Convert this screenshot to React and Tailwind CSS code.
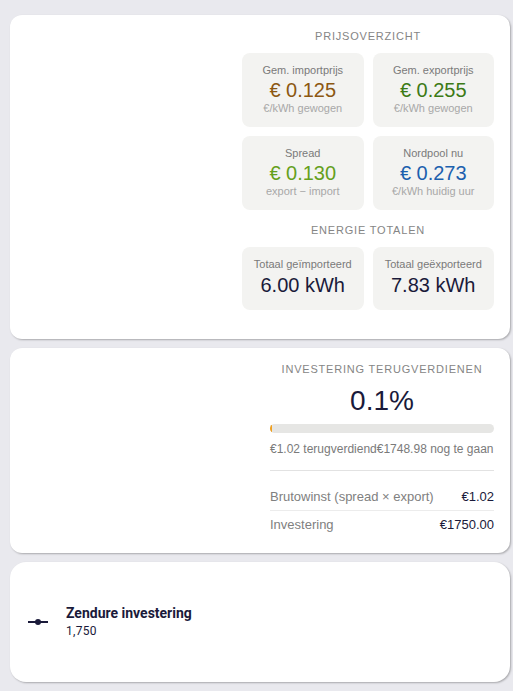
export default function App() {
  const tiles = [
    { label: "Gem. importprijs", value: "€ 0.125", sub: "€/kWh gewogen", color: "text-[#8c5812]" },
    { label: "Gem. exportprijs", value: "€ 0.255", sub: "€/kWh gewogen", color: "text-[#3c7a16]" },
    { label: "Spread", value: "€ 0.130", sub: "export − import", color: "text-[#65a01c]" },
    { label: "Nordpool nu", value: "€ 0.273", sub: "€/kWh huidig uur", color: "text-[#1c60ae]" },
  ];
  const totals = [
    { label: "Totaal geïmporteerd", value: "6.00 kWh" },
    { label: "Totaal geëxporteerd", value: "7.83 kWh" },
  ];

  return (
    <div className="min-h-[691px] bg-[#e9e9ee] pt-[15px] pb-[9px] pl-[10px] pr-[3px] flex flex-col gap-[9px] font-['Liberation_Sans',Arial,sans-serif]">
      {/* prijsoverzicht */}
      <div className="bg-white rounded-[12px] shadow-[1px_1px_2px_rgba(0,0,0,0.28)] pt-[14px] pb-[29px] pr-[16px] flex justify-end">
        <div className="w-[252px] flex flex-col">
          <h2 className="text-[11px] leading-[14px] tracking-[0.8px] text-[#858585] text-center">PRIJSOVERZICHT</h2>
          <div className="grid grid-cols-2 gap-[9px] mt-[10px]">
            {tiles.map((t) => (
              <div key={t.label} className="bg-[#f3f3f1] rounded-[8px] h-[74px] pt-[10px] flex flex-col items-center">
                <p className="text-[11px] leading-[14px] text-[#7a7a7a]">{t.label}</p>
                <p className={"text-[20px] leading-[24px] mt-[1px] " + t.color}>{t.value}</p>
                <p className="text-[11px] leading-[13px] text-[#a8a8a8]">{t.sub}</p>
              </div>
            ))}
          </div>
          <h2 className="text-[11px] leading-[14px] tracking-[0.8px] text-[#858585] text-center mt-[13px]">ENERGIE TOTALEN</h2>
          <div className="grid grid-cols-2 gap-[9px] mt-[10px]">
            {totals.map((t) => (
              <div key={t.label} className="bg-[#f3f3f1] rounded-[8px] h-[63px] pt-[10px] flex flex-col items-center">
                <p className="text-[11px] leading-[14px] text-[#7a7a7a]">{t.label}</p>
                <p className="text-[20px] leading-[24px] mt-[2px] text-[#1a1a3a]">{t.value}</p>
              </div>
            ))}
          </div>
        </div>
      </div>

      {/* investering */}
      <div className="bg-white rounded-[12px] shadow-[1px_1px_2px_rgba(0,0,0,0.28)] pt-[14px] pb-[14px] pr-[16px] flex justify-end">
        <div className="w-[224px] flex flex-col">
          <h2 className="text-[11px] leading-[14px] tracking-[0.8px] text-[#858585] text-center whitespace-nowrap">INVESTERING TERUGVERDIENEN</h2>
          <p className="text-[28px] leading-[34px] mt-[8px] text-center text-[#1a1a3a]">0.1%</p>
          <div className="h-[9px] mt-[6px] rounded-full bg-[#e6e6e4] overflow-hidden">
            <div className="h-full w-[2px] bg-[#f0a020]" />
          </div>
          <div className="flex whitespace-nowrap text-[12px] leading-[16px] text-[#7a7a7a] mt-[8px]">
            <span>€1.02 terugverdiend</span>
            <span>€1748.98 nog te gaan</span>
          </div>
          <div className="border-t border-[#e2e2e2] mt-[13px] pt-[12px] text-[13px]">
            <div className="flex justify-between h-[28px] items-center border-b border-[#ececec]">
              <span className="text-[#808080]">Brutowinst (spread × export)</span>
              <span className="text-[#1a1a3a]">€1.02</span>
            </div>
            <div className="flex justify-between h-[28px] items-center">
              <span className="text-[#808080]">Investering</span>
              <span className="text-[#1a1a3a]">€1750.00</span>
            </div>
          </div>
        </div>
      </div>

      {/* entity */}
      <div className="bg-white rounded-[16px] shadow-[1px_1px_2px_rgba(0,0,0,0.28)] h-[120px] flex items-center pl-[16px] font-['Roboto',sans-serif]">
        <svg width="24" height="24" viewBox="0 0 24 24" className="text-[#1a1a3a]">
          <line x1="2" y1="12" x2="22" y2="12" stroke="currentColor" strokeWidth="2" />
          <circle cx="12" cy="12" r="3" fill="currentColor" />
        </svg>
        <div className="ml-[16px] flex flex-col">
          <span className="text-[14px] leading-[18px] font-bold text-[#1a1a3a]">Zendure investering</span>
          <span className="text-[12px] leading-[18px] text-[#1a1a3a] tracking-[0.3px]">1,750</span>
        </div>
      </div>
    </div>
  );
}
